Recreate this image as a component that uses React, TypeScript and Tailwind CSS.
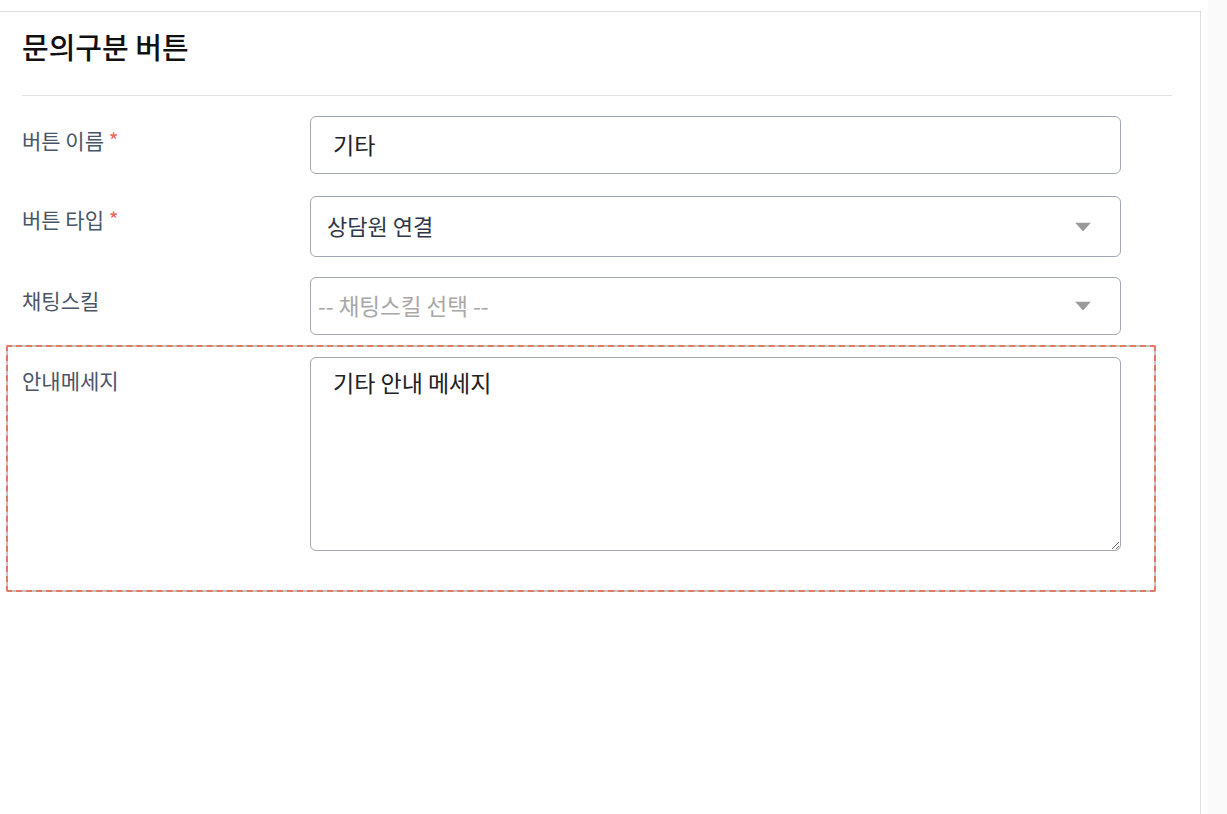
import React from "react"

const font = { fontFamily: '"Noto Sans CJK KR", "Noto Sans", sans-serif' }

function Caret() {
  return (
    <svg width="16" height="9" viewBox="0 0 16 9" className="absolute right-[29px] top-1/2 -translate-y-1/2">
      <path d="M0 0 L16 0 L8 9 Z" fill="#9a9a9a" />
    </svg>
  )
}

export default function App() {
  const [name, setName] = React.useState("기타")
  const [message, setMessage] = React.useState("기타 안내 메세지")

  return (
    <div className="flex min-h-[814px] bg-white" style={font}>
      {/* PANEL */}
      <div className="w-[1201px] mt-[11px] border-t border-r border-[#dcdcdc] bg-white">
        <div className="px-[22px] pr-[28px]">
          <h2 className="pt-[16px] text-[29px] leading-9 font-medium text-[#111]">문의구분 버튼</h2>
          <div className="mt-[31px] border-t border-[#e2e2e2]" />

          {/* BUTTON NAME */}
          <div className="flex mt-[20px]">
            <label className="w-[288px] pt-[10px] text-[21px] leading-7 text-[#4a5568]">
              버튼 이름 <span className="text-[#f0625a]">*</span>
            </label>
            <input
              className="w-[811px] h-[58px] rounded-md border border-[#a3a7b3] px-[22px] pb-[3px] text-[23px] text-[#222] outline-none"
              value={name}
              onChange={(e) => setName(e.target.value)}
            />
          </div>

          {/* BUTTON TYPE */}
          <div className="flex mt-[22px]">
            <label className="w-[288px] pt-[9px] text-[21px] leading-7 text-[#4a5568]">
              버튼 타입 <span className="text-[#f0625a]">*</span>
            </label>
            <div className="relative w-[811px] h-[61px] rounded-md border border-[#a3a7b3] flex items-center px-[16px] pb-[3px] text-[22px] text-[#2d3748]">
              상담원 연결
              <Caret />
            </div>
          </div>

          {/* CHATTING SKILL */}
          <div className="flex mt-[20px]">
            <label className="w-[288px] pt-[9px] text-[21px] leading-7 text-[#4a5568]">채팅스킬</label>
            <div className="relative w-[811px] h-[58px] rounded-md border border-[#a3a7b3] flex items-center px-[7px] text-[22.5px] text-[#a8a8a8]">
              -- 채팅스킬 선택 --
              <Caret />
            </div>
          </div>

          {/* GUIDE MESSAGE */}
          <div className="-ml-[16px] w-[1150px] mt-[10px] bg-[#c4c4c4] rounded-[2px]">
            <div className="flex pl-[14px] pt-[10px] pb-[39px] border-2 border-dashed border-[#df7b60] bg-white bg-clip-padding rounded-[2px]">
              <label className="w-[288px] pt-[9px] text-[21px] leading-7 text-[#4a5568]">안내메세지</label>
              <textarea
                className="w-[811px] h-[194px] rounded-md border border-[#a3a7b3] px-[22px] pt-[8px] text-[23px] leading-8 text-[#222] outline-none"
                value={message}
                onChange={(e) => setMessage(e.target.value)}
              />
            </div>
          </div>
        </div>
      </div>
      <div className="w-[7px] bg-white" />
      <div className="flex-1 bg-[#fafafa]" />
    </div>
  )
}
